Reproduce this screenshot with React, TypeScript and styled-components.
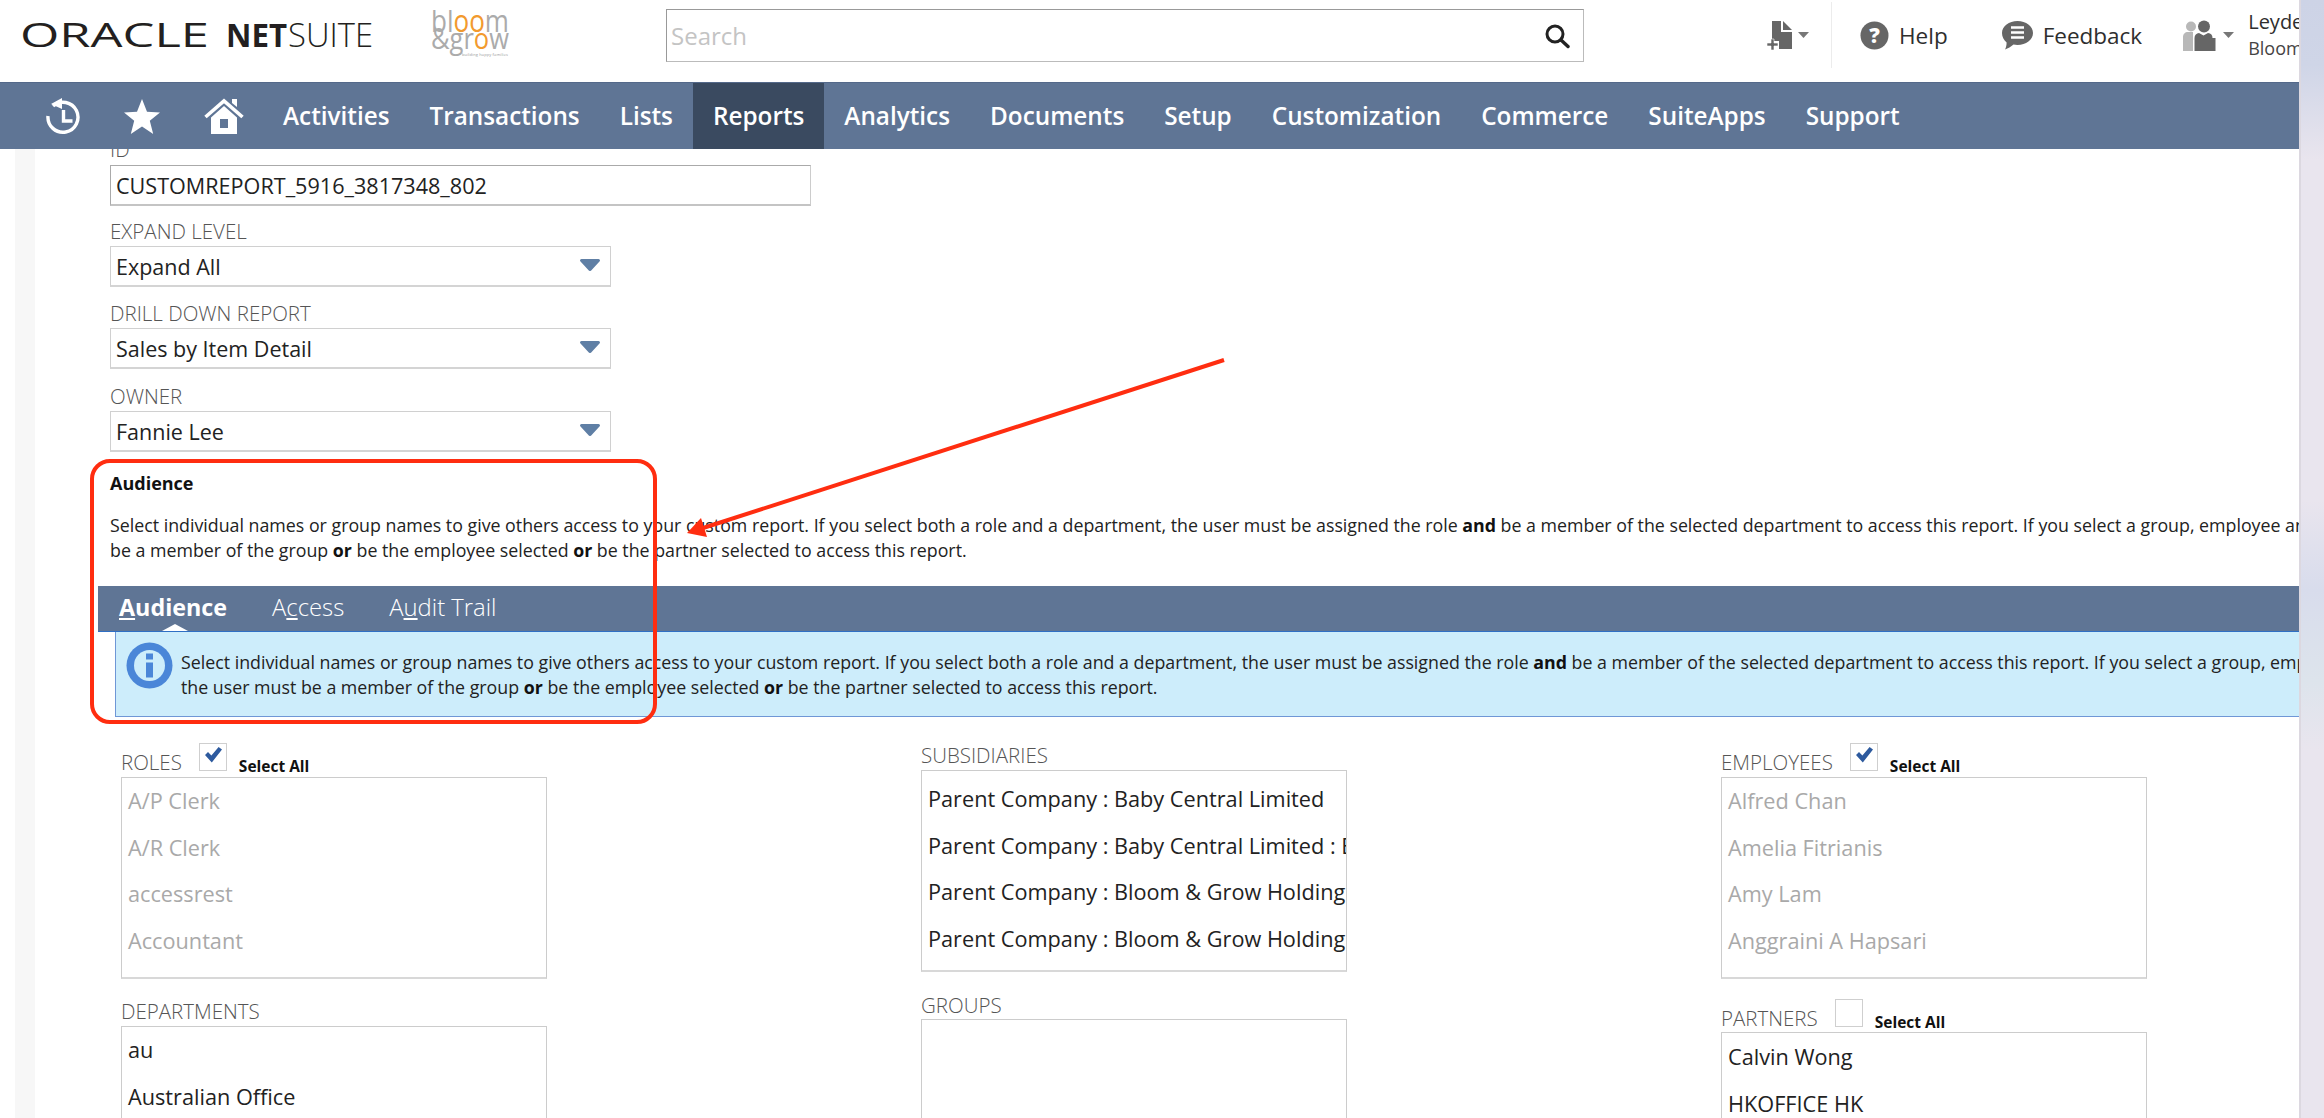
import React from "react";
import styled, { createGlobalStyle } from "styled-components";

const Global = createGlobalStyle`
  html, body { margin: 0; padding: 0; background: #fff; }
  body { font-family: "Open Sans", "Noto Sans", sans-serif; color: #222; }
  * { box-sizing: border-box; }
`;

const Page = styled.div`
  position: relative;
  display: flex;
  width: 2324px;
  height: 1118px;
  overflow: hidden;
  background: #fff;
`;
const Main = styled.div`
  display: flex;
  flex-direction: column;
  width: 2299px;
  overflow: hidden;
`;
const EdgeStrip = styled.div`
  width: 25px;
  border-left: 2px solid #dcd8e0;
  background: linear-gradient(
    180deg,
    #cdd3e6 0,
    #cfd5e7 65px,
    #e9e5ee 160px,
    #e9e5ee 500px,
    #d8dcec 590px,
    #dde4ec 680px,
    #e9e5ee 750px,
    #e9e5ee 100%
  );
`;

const Header = styled.header`
  display: flex;
  align-items: center;
  height: 82px;
  flex: none;
  background: #fff;
`;
const OracleLogo = styled.svg`
  width: 354px;
  height: 40px;
  margin-left: 20px;
  margin-top: -10px;
  flex: none;
`;
const BloomLogo = styled.svg`
  width: 80px;
  height: 52px;
  margin-left: 57px;
  margin-top: -11px;
  flex: none;
`;
const SearchBox = styled.div`
  display: flex;
  align-items: center;
  justify-content: space-between;
  width: 918px;
  height: 53px;
  margin-left: 155px;
  margin-top: -11px;
  padding: 0 13px 0 4px;
  border: 1px solid #999;
  border-right-color: #bbb;
  border-bottom-color: #bbb;
  flex: none;
`;
const SearchHint = styled.span`
  font-size: 24px;
  color: #c4c4c4;
`;
const HeaderTools = styled.div`
  display: flex;
  align-items: center;
  height: 66px;
  margin-left: 182px;
  margin-top: -12px;
  flex: none;
`;
const ToolIcon = styled.svg`
  flex: none;
`;
const Caret = styled.svg`
  width: 11px;
  height: 6px;
  flex: none;
`;
const ToolDivider = styled.div`
  width: 1px;
  height: 66px;
  margin: 0 28px 0 22px;
  background: #ececec;
`;
const ToolLabel = styled.span<{ $after: number }>`
  font-size: 22.5px;
  color: #2e2e2e;
  margin: 0 ${(p) => p.$after}px 0 10px;
  white-space: nowrap;
`;
const UserBlock = styled.div`
  display: flex;
  flex-direction: column;
  margin-left: 14px;
  white-space: nowrap;
  width: 60px;
  overflow: hidden;
`;
const UserName = styled.span`
  font-size: 20px;
  line-height: 26px;
  color: #2e2e2e;
`;
const UserOrg = styled.span`
  font-size: 18px;
  line-height: 26px;
  color: #444;
`;

const Nav = styled.nav`
  display: flex;
  align-items: stretch;
  height: 67px;
  flex: none;
  background: #5f7595;
  border-top: 1px solid #54698a;
`;
const NavIcons = styled.div`
  display: flex;
  align-items: center;
  gap: 44px;
  width: 263px;
  padding-left: 46px;
  flex: none;
`;
const NavItem = styled.a<{ $active?: boolean }>`
  display: flex;
  align-items: center;
  padding: 0 20px 2px;
  font-size: 24.3px;
  font-weight: 600;
  color: #fff;
  background: ${(p) => (p.$active ? "#3a4a60" : "transparent")};
`;

const Content = styled.div`
  display: flex;
  flex: 1;
  min-height: 0;
  overflow: hidden;
`;
const Gutter = styled.div`
  width: 20px;
  margin-left: 15px;
  background: #f7f7f7;
  flex: none;
`;
const Body = styled.main`
  flex: 1;
  min-width: 0;
  margin-top: -8px;
  padding-left: 75px;
`;
const Field = styled.div<{ $top?: number }>`
  margin-top: ${(p) => p.$top ?? 0}px;
`;
const FieldLabel = styled.div`
  font-size: 20.5px;
  font-weight: 300;
  line-height: 17px;
  padding-bottom: 3px;
  color: #555;
  white-space: nowrap;
`;
const TextInput = styled.div`
  display: flex;
  align-items: center;
  width: 701px;
  height: 41px;
  margin-top: 4px;
  padding-left: 5px;
  font-size: 21.6px;
  color: #222;
  border: 1px solid #aaa;
  border-right-color: #ccc;
  border-bottom: 2px solid #c4c4c4;
`;
const SelectBox = styled.div`
  display: flex;
  align-items: center;
  justify-content: space-between;
  width: 501px;
  height: 41px;
  margin-top: 3px;
  padding: 0 10px 0 5px;
  font-size: 21.5px;
  color: #222;
  border: 1px solid #d0d0d0;
  border-bottom: 2px solid #d4d4d4;
`;
const SelectArrow = styled.svg`
  width: 20px;
  height: 12px;
  flex: none;
  margin-top: -2px;
`;
const Heading = styled.h2`
  margin: 21px 0 0;
  font-size: 18px;
  font-weight: 700;
  line-height: 20px;
  color: #111;
`;
const Lines = styled.p`
  margin: 20px 0 0;
  font-size: 17.8px;
  line-height: 25px;
  color: #222;
  white-space: nowrap;
  b { font-weight: 700; color: #111; }
`;
const Line = styled.span`
  display: block;
`;
const TabBar = styled.div`
  display: flex;
  align-items: flex-start;
  gap: 45px;
  height: 46px;
  margin: 23px 0 0 -12px;
  padding-left: 21px;
  background: #5f7595;
  border-bottom: 1px solid #2f6fc4;
`;
const Tab = styled.span<{ $active?: boolean }>`
  position: relative;
  height: 45px;
  font-size: ${(p) => (p.$active ? 23.3 : 23.8)}px;
  line-height: 42px;
  font-weight: ${(p) => (p.$active ? 700 : 300)};
  color: #fff;
  u { text-decoration-thickness: 2px; text-underline-offset: 2px; }
  ${(p) =>
    p.$active
      ? `&::after {
          content: "";
          position: absolute;
          left: 43px;
          bottom: 0;
          border-left: 13px solid transparent;
          border-right: 13px solid transparent;
          border-bottom: 7px solid #fff;
        }`
      : ""}
`;
const InfoBox = styled.div`
  display: flex;
  align-items: flex-start;
  height: 85px;
  margin-left: 5px;
  padding: 10px 0 0 10px;
  background: #cdedfb;
  border-left: 1px solid #6f97d6;
  border-bottom: 1px solid #6f97d6;
`;
const InfoIcon = styled.svg`
  width: 47px;
  height: 47px;
  flex: none;
`;
const InfoLines = styled(Lines)`
  margin: 8px 0 0 8px;
`;
const Columns = styled.div`
  display: grid;
  grid-template-columns: repeat(3, 800px);
  margin: 26px 0 0 11px;
`;
const Column = styled.div`
  display: flex;
  flex-direction: column;
  align-items: flex-start;
`;
const LabelRow = styled.div<{ $top?: number; $bottom?: number }>`
  display: flex;
  align-items: flex-end;
  height: 31px;
  margin-top: ${(p) => p.$top ?? 0}px;
  margin-bottom: ${(p) => p.$bottom ?? 3}px;
`;
const Check = styled.div`
  display: flex;
  align-items: center;
  justify-content: center;
  width: 28px;
  height: 28px;
  margin: 0 12px 3px 17px;
  background: #fff;
  border: 1px solid #cfcfcf;
`;
const CheckMark = styled.svg`
  width: 20px;
  height: 20px;
  margin-top: -4px;
`;
const SelectAll = styled.span`
  font-size: 15.5px;
  font-weight: 700;
  line-height: 20px;
  color: #111;
  margin-bottom: -2px;
`;
const PlainLabel = styled(FieldLabel)<{ $top: number; $bottom: number }>`
  margin-top: ${(p) => p.$top}px;
  margin-bottom: ${(p) => p.$bottom}px;
`;
const ListBox = styled.div<{ $height?: number; $pad?: number; $muted?: boolean }>`
  width: 426px;
  height: ${(p) => (p.$height ? `${p.$height}px` : "200px")};
  padding: ${(p) => p.$pad ?? 0}px 0 0 6px;
  overflow: hidden;
  font-size: 21.7px;
  line-height: 45px;
  white-space: nowrap;
  color: ${(p) => (p.$muted ? "#a9a9a9" : "#222")};
  border: 1px solid #ccc;
  border-bottom: 2px solid #d8d8d8;
`;
const ListItem = styled.div`
  height: 46.5px;
`;

const RedBox = styled.div`
  position: absolute;
  left: 90px;
  top: 459px;
  width: 567px;
  height: 265px;
  border: 4px solid #ff2d10;
  border-radius: 20px;
  pointer-events: none;
`;
const ArrowLayer = styled.svg`
  position: absolute;
  left: 0;
  top: 0;
  width: 2324px;
  height: 1118px;
  pointer-events: none;
`;

const DownCaret = () => (
  <Caret viewBox="0 0 11 6">
    <path d="M0 0h11L5.5 6z" fill="#777" />
  </Caret>
);
const Arrow = () => (
  <SelectArrow viewBox="0 0 20 12">
    <path d="M1.5 0h17a1.5 1.5 0 0 1 1.2 2.3L11.2 11.4a1.6 1.6 0 0 1-2.4 0L.3 2.3A1.5 1.5 0 0 1 1.5 0z" fill="#5f7fa5" />
  </SelectArrow>
);
const Tick = () => (
  <CheckMark viewBox="0 0 20 20">
    <path d="M2 10l3-3 3.4 3.6L15.6 2 19 4.6 8.8 17.4z" fill="#2d5a9e" />
  </CheckMark>
);

const NAV = ["Activities", "Transactions", "Lists", "Reports", "Analytics", "Documents", "Setup", "Customization", "Commerce", "SuiteApps", "Support"];
const ROLES = ["A/P Clerk", "A/R Clerk", "accessrest", "Accountant"];
const SUBS = ["Parent Company : Baby Central Limited", "Parent Company : Baby Central Limited : B", "Parent Company : Bloom & Grow Holding", "Parent Company : Bloom & Grow Holding"];
const EMPLOYEES = ["Alfred Chan", "Amelia Fitrianis", "Amy Lam", "Anggraini A Hapsari"];

export default function App() {
  return (
    <Page>
      <Global />
      <Main>
        <Header>
          <OracleLogo viewBox="0 0 354 40">
            <text x="0" y="31" fontFamily="Open Sans" fontSize="33" fontWeight="500" fill="#231f20" textLength="189" lengthAdjust="spacingAndGlyphs">ORACLE</text>
            <text x="206" y="31" fontFamily="Open Sans" fontSize="33" fontWeight="700" fill="#231f20" textLength="61" lengthAdjust="spacingAndGlyphs">NET</text>
            <text x="268" y="31" fontFamily="Open Sans" fontSize="33" fontWeight="300" fill="#231f20" textLength="85" lengthAdjust="spacingAndGlyphs">SUITE</text>
          </OracleLogo>
          <BloomLogo viewBox="0 0 80 52">
            <text x="0" y="22" fontFamily="Open Sans" fontSize="31" fontWeight="400" fill="#ababab" textLength="78" lengthAdjust="spacingAndGlyphs">
              bl<tspan fill="#f29a2e">oo</tspan>m
            </text>
            <text x="0" y="39" fontFamily="Open Sans" fontSize="29" fontWeight="400" fill="#ababab" textLength="78" lengthAdjust="spacingAndGlyphs">
              &amp;gr<tspan fill="#f29a2e">o</tspan>w
            </text>
            <text x="31" y="46" fontFamily="Open Sans" fontSize="4" fill="#999" textLength="46">building happy families</text>
          </BloomLogo>
          <SearchBox>
            <SearchHint>Search</SearchHint>
            <svg width="26" height="26" viewBox="0 0 26 26" fill="none">
              <circle cx="11" cy="11" r="8" stroke="#222" strokeWidth="3" />
              <path d="M17 17l7 6.500" stroke="#222" strokeWidth="3.400" strokeLinecap="round" />
            </svg>
          </SearchBox>
          <HeaderTools>
            <ToolIcon width="28" height="30" viewBox="0 0 28 30" style={{ marginRight: 4 }}>
              <path d="M6 1h9v11h11v17H13v-8H6z" fill="#666" />
              <path d="M17 1l9 9h-9z" fill="#666" />
              <path d="M5 19h3v4h4v3H8v4H5v-4H1v-3h4z" fill="#666" stroke="#fff" strokeWidth=".6" />
            </ToolIcon>
            <DownCaret />
            <ToolDivider />
            <ToolIcon width="29" height="29" viewBox="0 0 29 29">
              <circle cx="14.500" cy="14.500" r="14" fill="#666" />
              <text x="14.500" y="22" textAnchor="middle" fontFamily="Open Sans" fontWeight="800" fontSize="21" fill="#fff">?</text>
            </ToolIcon>
            <ToolLabel $after={54}>Help</ToolLabel>
            <ToolIcon width="31" height="29" viewBox="0 0 31 29">
              <path d="M15.500 0C24 0 31 5.200 31 12s-7 12-15.500 12c-1.500 0-2.800-.1-4-.4C9 25.600 6 27.600 3 28.600c1.100-2.200 1.600-4.400 1.600-7.200C1.800 19.200 0 15.800 0 12 0 5.200 7 0 15.500 0z" fill="#666" />
              <path d="M9 6.500h13M9 11.500h13M9 16.500h13" stroke="#fff" strokeWidth="2.400" />
            </ToolIcon>
            <ToolLabel $after={41}>Feedback</ToolLabel>
            <ToolIcon width="34" height="31" viewBox="0 0 34 31" style={{ marginRight: 6 }}>
              <circle cx="8" cy="6.500" r="5" fill="#b8b8b8" />
              <path d="M0 31V17c0-3 2-5 5-5h5v19z" fill="#b8b8b8" />
              <circle cx="21" cy="6.500" r="6" fill="#666" />
              <path d="M12 31V18c0-3 2-4.500 4.500-5l4.500 2.500 4.500-2.500c3 .5 4.500 2 4.500 5h3v13z" fill="#666" transform="translate(-.5 0)" />
            </ToolIcon>
            <DownCaret />
            <UserBlock>
              <UserName>Leyden</UserName>
              <UserOrg>Bloom &amp;</UserOrg>
            </UserBlock>
          </HeaderTools>
        </Header>
        <Nav>
          <NavIcons>
            <svg width="35" height="36" viewBox="0 0 35 36" fill="none">
              <path d="M7 9a15 15 0 1 1-5 10" stroke="#fff" strokeWidth="3.400" transform="translate(0 -1)" />
              <path d="M16 0v11L5 6z" fill="#fff" />
              <path d="M17.500 12v11h9" stroke="#fff" strokeWidth="3.400" />
            </svg>
            <svg width="36" height="35" viewBox="0 0 36 35" style={{ marginLeft: -1 }}>
              <path d="M18 0l5 12.800 13 .6-10.200 8.300L29.200 35 18 27.400 6.800 35l3.400-13.300L0 13.400l13-.6z" fill="#fff" />
            </svg>
            <svg width="40" height="36" viewBox="0 0 40 36">
              <path d="M28 1h5v8l-5-4z" fill="#fff" />
              <path d="M1.500 19L20 3l18.500 16" fill="none" stroke="#fff" strokeWidth="3.600" />
              <path fillRule="evenodd" d="M20 8l13 11.500V36H7V19.500zM16 21v9h8v-9z" fill="#fff" />
            </svg>
          </NavIcons>
          {NAV.map((n) => (
            <NavItem key={n} $active={n === "Reports"}>{n}</NavItem>
          ))}
        </Nav>
        <Content>
          <Gutter />
          <Body>
            <Field>
              <FieldLabel>ID</FieldLabel>
              <TextInput>CUSTOMREPORT_5916_3817348_802</TextInput>
            </Field>
            <Field $top={17}>
              <FieldLabel>EXPAND LEVEL</FieldLabel>
              <SelectBox>Expand All<Arrow /></SelectBox>
            </Field>
            <Field $top={18}>
              <FieldLabel>DRILL DOWN REPORT</FieldLabel>
              <SelectBox>Sales by Item Detail<Arrow /></SelectBox>
            </Field>
            <Field $top={19}>
              <FieldLabel>OWNER</FieldLabel>
              <SelectBox>Fannie Lee<Arrow /></SelectBox>
            </Field>
            <Heading>Audience</Heading>
            <Lines>
              <Line>Select individual names or group names to give others access to your custom report. If you select both a role and a department, the user must be assigned the role <b>and</b> be a member of the selected department to access this report. If you select a group, employee and partner, the user must</Line>
              <Line>be a member of the group <b>or</b> be the employee selected <b>or</b> be the partner selected to access this report.</Line>
            </Lines>
            <TabBar>
              <Tab $active><u>A</u>udience</Tab>
              <Tab>A<u>c</u>cess</Tab>
              <Tab>A<u>u</u>dit Trail</Tab>
            </TabBar>
            <InfoBox>
              <InfoIcon viewBox="0 0 47 47">
                <circle cx="23.500" cy="23.500" r="23" fill="#4a86d8" />
                <circle cx="23.500" cy="23.500" r="15.500" fill="#cdedfb" />
                <rect x="20" y="11.500" width="7" height="6" fill="#4a86d8" />
                <rect x="20" y="20.500" width="7" height="15" fill="#4a86d8" />
              </InfoIcon>
              <InfoLines>
                <Line>Select individual names or group names to give others access to your custom report. If you select both a role and a department, the user must be assigned the role <b>and</b> be a member of the selected department to access this report. If you select a group, employee and partner,</Line>
                <Line>the user must be a member of the group <b>or</b> be the employee selected <b>or</b> be the partner selected to access this report.</Line>
              </InfoLines>
            </InfoBox>
            <Columns>
              <Column>
                <LabelRow>
                  <FieldLabel>ROLES</FieldLabel>
                  <Check><Tick /></Check>
                  <SelectAll>Select All</SelectAll>
                </LabelRow>
                <ListBox $height={202} $muted>
                  {ROLES.map((r) => <ListItem key={r}>{r}</ListItem>)}
                </ListBox>
                <PlainLabel $top={24} $bottom={3}>DEPARTMENTS</PlainLabel>
                <ListBox>
                  <ListItem>au</ListItem>
                  <ListItem>Australian Office</ListItem>
                </ListBox>
              </Column>
              <Column>
                <PlainLabel $top={4} $bottom={3}>SUBSIDIARIES</PlainLabel>
                <ListBox $height={202} $pad={5}>
                  {SUBS.map((s, i) => <ListItem key={i}>{s}</ListItem>)}
                </ListBox>
                <PlainLabel $top={25} $bottom={2}>GROUPS</PlainLabel>
                <ListBox />
              </Column>
              <Column>
                <LabelRow>
                  <FieldLabel>EMPLOYEES</FieldLabel>
                  <Check><Tick /></Check>
                  <SelectAll>Select All</SelectAll>
                </LabelRow>
                <ListBox $height={202} $muted>
                  {EMPLOYEES.map((e) => <ListItem key={e}>{e}</ListItem>)}
                </ListBox>
                <LabelRow $top={20} $bottom={2}>
                  <FieldLabel>PARTNERS</FieldLabel>
                  <Check />
                  <SelectAll>Select All</SelectAll>
                </LabelRow>
                <ListBox $pad={1}>
                  <ListItem>Calvin Wong</ListItem>
                  <ListItem>HKOFFICE HK</ListItem>
                </ListBox>
              </Column>
            </Columns>
          </Body>
        </Content>
      </Main>
      <EdgeStrip />
      <RedBox />
      <ArrowLayer viewBox="0 0 2324 1118">
        <path d="M1224 360L700 529" stroke="#ff2d10" strokeWidth="4" />
        <path d="M687 533L701 518L707 537z" fill="#ff2d10" />
      </ArrowLayer>
    </Page>
  );
}
